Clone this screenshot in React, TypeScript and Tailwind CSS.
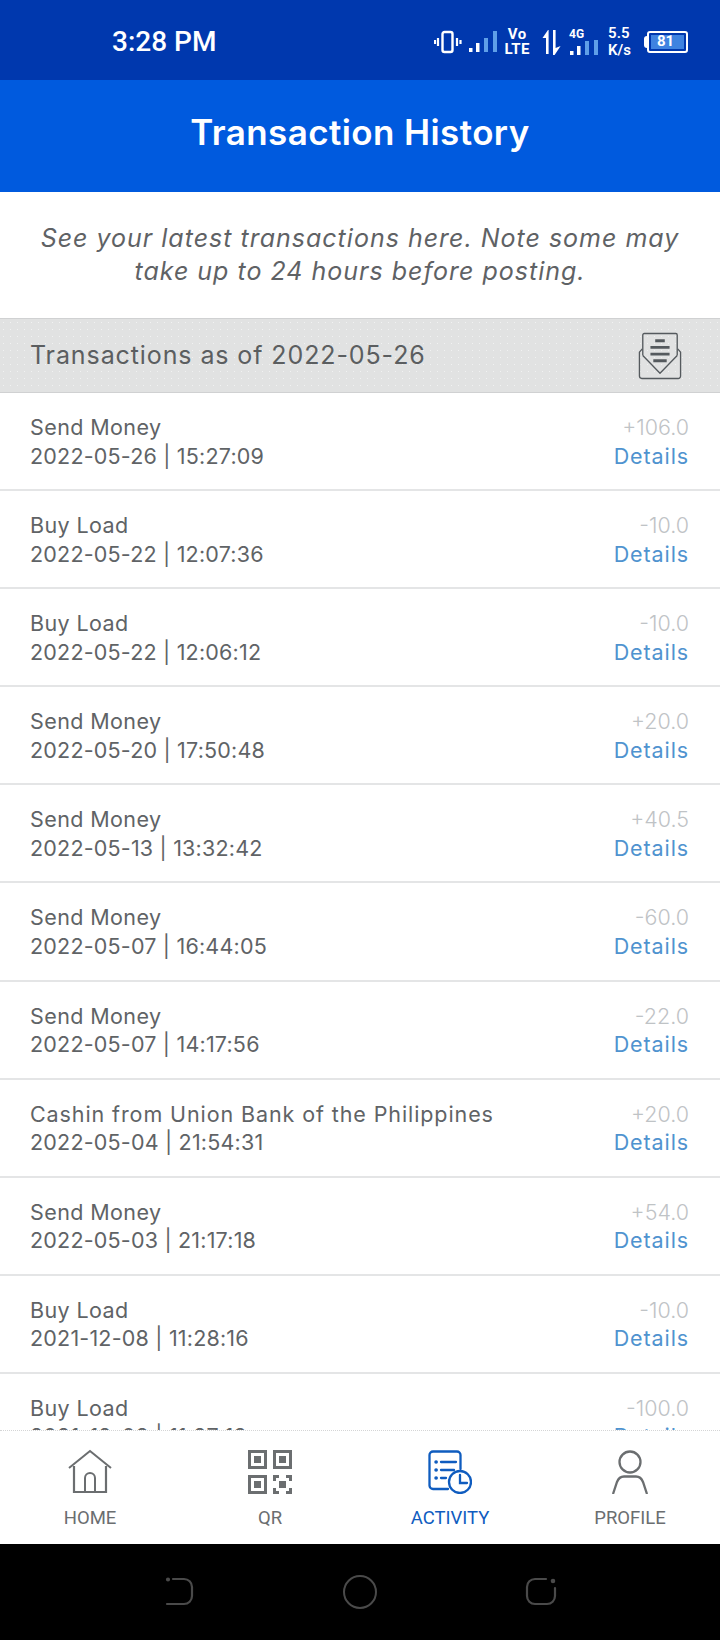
const rows = [
  { title: "Send Money", date: "2022-05-26 | 15:27:09", amount: "+106.0" },
  { title: "Buy Load", date: "2022-05-22 | 12:07:36", amount: "-10.0" },
  { title: "Buy Load", date: "2022-05-22 | 12:06:12", amount: "-10.0" },
  { title: "Send Money", date: "2022-05-20 | 17:50:48", amount: "+20.0" },
  { title: "Send Money", date: "2022-05-13 | 13:32:42", amount: "+40.5" },
  { title: "Send Money", date: "2022-05-07 | 16:44:05", amount: "-60.0" },
  { title: "Send Money", date: "2022-05-07 | 14:17:56", amount: "-22.0" },
  { title: "Cashin from Union Bank of the Philippines", date: "2022-05-04 | 21:54:31", amount: "+20.0", wide: true },
  { title: "Send Money", date: "2022-05-03 | 21:17:18", amount: "+54.0" },
  { title: "Buy Load", date: "2021-12-08 | 11:28:16", amount: "-10.0" },
  { title: "Buy Load", date: "2021-12-08 | 11:27:19", amount: "-100.0" },
];

function SignalBars({ short }: { short?: boolean }) {
  return (
    <svg width="30" height={short ? 16 : 23} viewBox={short ? "0 7 30 16" : "0 0 30 23"}>
      <rect x="1" y="18" width="3.500" height="4" fill="white" />
      <rect x="8" y="13" width="3.500" height="9" fill="white" />
      <rect x="16" y="8" width="4" height="14" fill="#5f9fe8" />
      <rect x="25" y="1" width="4" height="21" fill="#5f9fe8" />
    </svg>
  );
}

function StatusIcons() {
  return (
    <div className="flex items-center text-white font-['Roboto',sans-serif] font-medium">
      <svg width="28" height="24" viewBox="0 0 28 24" fill="none" stroke="white">
        <rect x="8.500" y="2" width="10" height="20" rx="2" strokeWidth="2.400" />
        <path d="M4 8v8M1 10v4M23 8v8M26.500 10v4" strokeWidth="2.200" />
      </svg>
      <div className="ml-[6px]">
        <SignalBars />
      </div>
      <div className="ml-[6px] flex flex-col items-center text-[15px] leading-[15px] font-bold tracking-[0.5px]">
        <span>Vo</span>
        <span>LTE</span>
      </div>
      <svg width="20" height="26" viewBox="0 0 20 26" fill="white" className="ml-[12px]">
        <path d="M6 1 .5 9H4v16h2.600V1zM11 1h2.600v18l5-2-6 9H11z" />
      </svg>
      <div className="ml-[7px] flex flex-col items-start">
        <span className="text-[12px] leading-[12px] font-bold">4G</span>
        <SignalBars short />
      </div>
      <div className="ml-[9px] flex flex-col items-start text-[15px] leading-[17px] font-semibold">
        <span>5.5</span>
        <span>K/s</span>
      </div>
      <div className="ml-[13px] flex items-center">
        <div className="h-[12px] w-[3px] rounded-l-sm bg-white" />
        <div className="flex h-[22px] w-[41px] items-center rounded-[3px] border-2 border-white p-[2px]">
          <div className="flex h-full w-full items-center justify-center bg-[#3f83e0] pr-1 text-[15px] leading-none font-bold">81</div>
        </div>
      </div>
    </div>
  );
}

function InboxIcon() {
  return (
    <svg width="44" height="48" viewBox="0 0 46 50" fill="none" stroke="#555a5e" strokeWidth="1.400" strokeLinejoin="round">
      <path d="M4.500 17.500 1.500 21v25a2.500 2.500 0 0 0 2.500 2.500h38a2.500 2.500 0 0 0 2.500-2.500V21l-3-3.500" />
      <path d="M5 24.500 23 43 41 24.500" />
      <path d="M5 24.500V3a1.500 1.500 0 0 1 1.500-1.500h33A1.500 1.500 0 0 1 41 3v21.500" />
      <path d="M18 9h10M13 16h20M13 23h20M16 30h14" strokeWidth="3" />
    </svg>
  );
}

function NavItem({ label, active, children }: { label: string; active?: boolean; children: React.ReactNode }) {
  return (
    <div className={`flex flex-1 flex-col items-center ${active ? "text-[#0f5cbf]" : "text-[#6b6e70]"}`}>
      <div className="flex h-[46px] items-center justify-center">{children}</div>
      <span className="mt-[13px] text-[18.500px] leading-[20px] font-['Roboto',sans-serif]">{label}</span>
    </div>
  );
}

export default function App() {
  return (
    <div className="flex h-[1640px] w-[720px] flex-col overflow-hidden bg-white font-['Inter',sans-serif]">
      {/* Status bar */}
      <div className="flex h-[80px] shrink-0 items-center justify-between bg-[#0038ae] pt-[3px] pr-[32px] pl-[112px]">
        <span className="text-[28px] font-medium text-white font-['Roboto',sans-serif]">3:28 PM</span>
        <StatusIcons />
      </div>

      {/* Header */}
      <div className="flex h-[112px] shrink-0 items-center justify-center bg-[#005ade] pb-[8px]">
        <h1 className="text-[35px] font-semibold tracking-[0.4px] text-white">Transaction History</h1>
      </div>

      {/* Intro */}
      <div className="flex h-[126px] shrink-0 items-center justify-center text-center text-[25px] leading-[33px] tracking-[1px] text-[#5f6265] italic">
        <p>See your latest transactions here. Note some may<br />take up to 24 hours before posting.</p>
      </div>

      {/* Date band */}
      <div className="flex h-[75px] shrink-0 items-center justify-between border-y border-[#d0d1d2] bg-[#e1e2e2] bg-[radial-gradient(circle,#f1f2f2_0.7px,transparent_1px)] bg-[length:7px_7px] pr-[38px] pl-[30px]">
        <span className="text-[25px] tracking-[0.9px] text-[#5b5e60]">Transactions as of 2022-05-26</span>
        <InboxIcon />
      </div>

      {/* Rows */}
      <div className="min-h-0 flex-1 overflow-hidden">
        {rows.map((row, i) => (
          <div key={i} className="flex h-[98.100px] items-start justify-between border-b-2 border-[#e4e5e6] pt-[20px] pr-[31px] pl-[30px]">
            <div className="text-[21.500px] leading-[28.500px] text-[#606366]">
              <div className={row.wide ? "tracking-[0.9px]" : "tracking-[0.4px]"}>{row.title}</div>
              <div className="tracking-[0.2px]">{row.date}</div>
            </div>
            <div className="flex flex-col items-end text-[21.500px] leading-[28.500px]">
              <span className="font-light text-[#bfc3c6]">{row.amount}</span>
              <span className="tracking-[0.9px] text-[#4f93cf]">Details</span>
            </div>
          </div>
        ))}
      </div>

      {/* Bottom nav */}
      <div className="flex h-[114px] shrink-0 border-t border-dotted border-[#d4d5d6] bg-white pt-[18px]">
        <NavItem label="HOME">
          <svg width="44" height="46" viewBox="0 0 44 46" fill="none" stroke="currentColor" strokeWidth="2">
            <path d="M1 19 22 2l21 17" />
            <path d="M6 17v26h32V17" strokeWidth="2.200" />
            <path d="M17 43V29a5 5 0 0 1 10 0v14" />
          </svg>
        </NavItem>
        <NavItem label="QR">
          <svg width="44" height="44" viewBox="0 0 44 44" fill="currentColor">
            <path fillRule="evenodd" d="M0 0h19v19H0zM3 3v13h13V3zM25 0h19v19H25zM28 3v13h13V3zM0 25h19v19H0zM3 28v13h13V28z" />
            <rect x="6" y="6" width="7" height="7" />
            <rect x="31" y="6" width="7" height="7" />
            <rect x="6" y="31" width="7" height="7" />
            <rect x="31" y="31" width="7" height="7" />
            <path d="M25 25h6v3h-3v3h-3zM38 25h6v6h-3v-3h-3zM25 38h3v3h3v3h-6zM41 38h3v6h-6v-3h3z" />
          </svg>
        </NavItem>
        <NavItem label="ACTIVITY" active>
          <svg width="44" height="44" viewBox="0 0 44 44" fill="none" stroke="currentColor" strokeWidth="2.300" strokeLinecap="round">
            <path d="M20 39H5a3.500 3.500 0 0 1-3.500-3.500V5A3.500 3.500 0 0 1 5 1.500h24A3.500 3.500 0 0 1 32.500 5v14" />
            <circle cx="32" cy="32" r="11" />
            <path d="M32 25v8h7" />
            <path d="M13 12h15M13 20h13M13 28h5" />
            <path d="M8 12h.2M8 20h.2M8 28h.2" strokeWidth="3.500" />
          </svg>
        </NavItem>
        <NavItem label="PROFILE">
          <svg width="38" height="44" viewBox="0 0 38 44" fill="none" stroke="currentColor" strokeWidth="2.300">
            <circle cx="19" cy="12" r="10.500" />
            <path d="M2 44 6 32c1.500-4 3.500-5.500 7-5.500h12c3.500 0 5.500 1.500 7 5.500l4 12" />
          </svg>
        </NavItem>
      </div>

      {/* System nav */}
      <div className="flex h-[96px] shrink-0 items-center justify-between bg-black px-[163px]">
        <svg width="32" height="30" viewBox="0 0 32 30" fill="none" stroke="#4a4a4a" strokeWidth="2.200" strokeLinecap="round">
          <path d="M10 2h11a8 8 0 0 1 8 8v9a8 8 0 0 1-8 8H4" />
          <circle cx="5" cy="2.500" r="1" fill="#4a4a4a" />
        </svg>
        <div className="h-[34px] w-[34px] rounded-full border-[2.500px] border-[#4a4a4a]" />
        <svg width="32" height="30" viewBox="0 0 32 30" fill="none" stroke="#4a4a4a" strokeWidth="2.200" strokeLinecap="round">
          <path d="M21 2H10a8 8 0 0 0-8 8v9a8 8 0 0 0 8 8h12a8 8 0 0 0 8-8V11" />
          <circle cx="28" cy="4" r="1.200" fill="#4a4a4a" />
        </svg>
      </div>
    </div>
  );
}
